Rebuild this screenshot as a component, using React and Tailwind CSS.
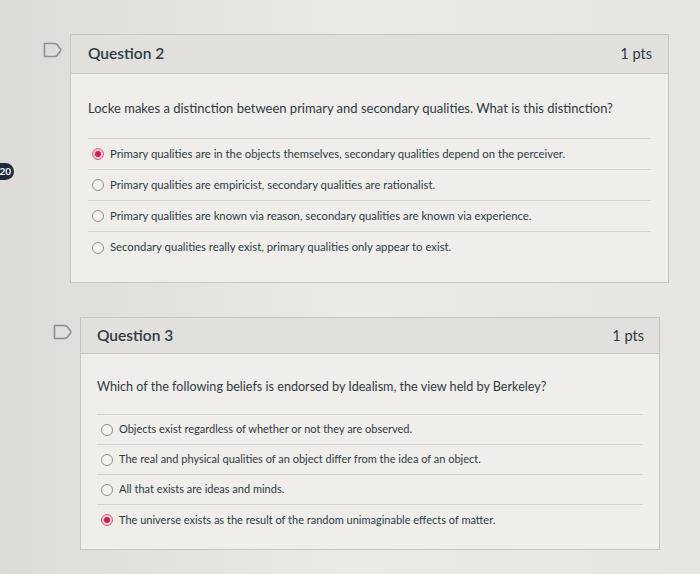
import React from "react";

const q2 = {
  title: "Question 2",
  text: "Locke makes a distinction between primary and secondary qualities. What is this distinction?",
  options: [
    "Primary qualities are in the objects themselves, secondary qualities depend on the perceiver.",
    "Primary qualities are empiricist, secondary qualities are rationalist.",
    "Primary qualities are known via reason, secondary qualities are known via experience.",
    "Secondary qualities really exist, primary qualities only appear to exist.",
  ],
  selected: 0,
};

const q3 = {
  title: "Question 3",
  text: "Which of the following beliefs is endorsed by Idealism, the view held by Berkeley?",
  options: [
    "Objects exist regardless of whether or not they are observed.",
    "The real and physical qualities of an object differ from the idea of an object.",
    "All that exists are ideas and minds.",
    "The universe exists as the result of the random unimaginable effects of matter.",
  ],
  selected: 3,
};

function Flag() {
  // bookmark flag outline
  return (
    <svg width="20" height="16" viewBox="0 0 20 16" fill="none">
      <path d="M1.5 1.5 H11.5 Q13 1.5 14 2.6 L17.5 7 Q18.3 8 17.5 9 L14 13.4 Q13 14.5 11.5 14.5 H1.5 Z" stroke="#8d8f93" strokeWidth="1.6" strokeLinejoin="round" />
    </svg>
  );
}

function Radio({ on }) {
  if (on) {
    return (
      <span className="w-[12px] h-[12px] rounded-full border-[1.5px] border-[#e4587f] bg-[#f6c9d6] flex items-center justify-center shrink-0">
        <span className="w-[6px] h-[6px] rounded-full bg-[#c8234f]" />
      </span>
    );
  }
  return <span className="w-[12px] h-[12px] rounded-full border border-[#8e8e8e] bg-[#f4f3f0] shrink-0" />;
}

function QuestionCard({ q, width, headH, bodyH, textTop, listTop, rowH, padX, optSize, textSize }) {
  return (
    <div className="border border-[#c6c5c0] bg-[#efeeea]" style={{ width }}>
      <div
        className="bg-[#e1e0dc] border-b border-[#c6c5c0] flex items-center justify-between text-[15.5px] font-semibold text-[#2d3b45]"
        style={{ height: headH, paddingLeft: padX, paddingRight: padX - 1 }}
      >
        <span>{q.title}</span>
        <span className="font-normal text-[14.5px]">1 pts</span>
      </div>
      <div style={{ height: bodyH, paddingLeft: padX, paddingRight: padX }}>
        <p className="leading-[18px] text-[#2d3b45] whitespace-nowrap" style={{ paddingTop: textTop, fontSize: textSize }}>
          {q.text}
        </p>
        <div className="border-t border-[#d3d2ce]" style={{ marginTop: listTop }}>
          {q.options.map((o, i) => (
            <div
              key={i}
              className={
                "flex items-center gap-[6px] pl-[4px] text-[#2d3b45] " +
                (i < q.options.length - 1 ? "border-b border-[#d3d2ce]" : "")
              }
              style={{ height: rowH, fontSize: optSize }}
            >
              <Radio on={i === q.selected} />
              <span>{o}</span>
            </div>
          ))}
        </div>
      </div>
    </div>
  );
}

export default function App() {
  return (
    <div
      className="relative w-[700px] h-[574px] overflow-hidden bg-gradient-to-r from-[#dcdbd7] via-[#ebeae6] to-[#e6e5e1] pt-[34px]"
      style={{ fontFamily: "Lato, 'Open Sans', sans-serif" }}
    >
      {/* page counter badge */}
      <div className="absolute left-[-8px] top-[163px] w-[22px] h-[17px] rounded-full bg-[#1e2a3d] text-white text-[10px] font-bold flex items-center justify-end pr-[3px]">
        20
      </div>

      <div className="flex ml-[43px] gap-[7px]">
        <div className="mt-[8px]">
          <Flag />
        </div>
        <QuestionCard q={q2} width={599} headH={39} bodyH={208} textTop={25} listTop={21} rowH={31} padX={17} optSize={11.3} textSize={13} />
      </div>

      <div className="flex ml-[53px] gap-[7px] mt-[34px]">
        <div className="mt-[7px]">
          <Flag />
        </div>
        <QuestionCard q={q3} width={580} headH={36} bodyH={195} textTop={24} listTop={18} rowH={30} padX={16} optSize={11} textSize={12.6} />
      </div>
    </div>
  );
}
